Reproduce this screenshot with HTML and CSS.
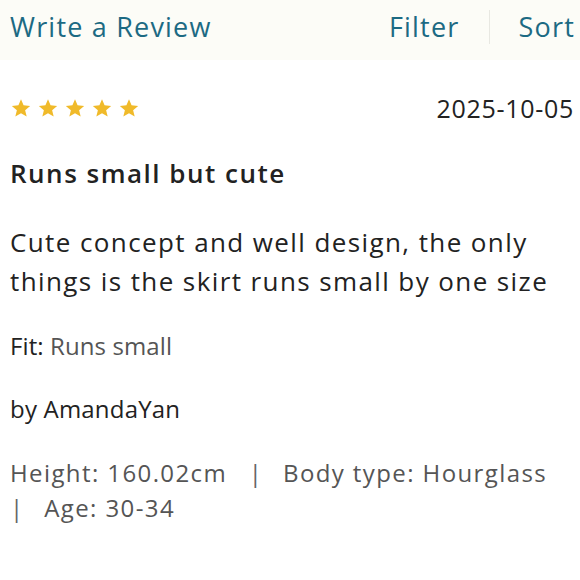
FILE: index.html
```html
<!DOCTYPE html>
<html lang="en">
<head>
<meta charset="utf-8">
<link rel="stylesheet" href="styles.css">
</head>
<body>
<header class="topbar">
  <a class="link">Write a Review</a>
  <nav class="actions">
    <a class="link">Filter</a>
    <span class="divider"></span>
    <a class="link">Sort</a>
  </nav>
</header>
<article class="review">
  <div class="meta-row">
    <div class="stars">
      <svg viewBox="0 0 24 24"><path d="M12 2.5l2.8 6.6 7.2.6-5.5 4.7 1.7 7-6.2-3.8-6.2 3.8 1.7-7L2 9.7l7.2-.6z"/></svg>
      <svg viewBox="0 0 24 24"><path d="M12 2.5l2.8 6.6 7.2.6-5.5 4.7 1.7 7-6.2-3.8-6.2 3.8 1.7-7L2 9.7l7.2-.6z"/></svg>
      <svg viewBox="0 0 24 24"><path d="M12 2.5l2.8 6.6 7.2.6-5.5 4.7 1.7 7-6.2-3.8-6.2 3.8 1.7-7L2 9.7l7.2-.6z"/></svg>
      <svg viewBox="0 0 24 24"><path d="M12 2.5l2.8 6.6 7.2.6-5.5 4.7 1.7 7-6.2-3.8-6.2 3.8 1.7-7L2 9.7l7.2-.6z"/></svg>
      <svg viewBox="0 0 24 24"><path d="M12 2.5l2.8 6.6 7.2.6-5.5 4.7 1.7 7-6.2-3.8-6.2 3.8 1.7-7L2 9.7l7.2-.6z"/></svg>
    </div>
    <span class="date">2025-10-05</span>
  </div>
  <h2 class="title">Runs small but cute</h2>
  <p class="body">Cute concept and well design, the only things is the skirt runs small by one size</p>
  <p class="fit"><span class="label">Fit:</span> Runs small</p>
  <p class="author">by AmandaYan</p>
  <p class="details"><span class="item">Height: 160.02cm</span> <span class="sep">|</span> <span class="item">Body type: Hourglass</span> <span class="sep">|</span> <span class="item">Age: 30-34</span></p>
</article>
</body>
</html>
```
FILE: styles.css
```css
* { box-sizing: border-box; }
html, body { margin: 0; padding: 0; background: #fff; }
body {
  font-family: "Open Sans", Lato, sans-serif;
  color: #222;
  width: 580px;
}
.topbar {
  display: flex;
  justify-content: space-between;
  align-items: center;
  height: 60px;
  background: #fcfcf7;
  padding: 0 5px 6px 10px;
}
.link {
  color: #1c6a83;
  font-size: 27px;
  line-height: 36px;
  letter-spacing: 1.2px;
}
.actions {
  display: flex;
  align-items: center;
}
.divider {
  width: 1px;
  height: 34px;
  background: #e8e8e2;
  margin: 0 28px 0 30px;
}
.review {
  padding: 0 6px 0 10px;
}
.meta-row {
  display: flex;
  justify-content: space-between;
  align-items: center;
  margin-top: 35px;
  height: 26px;
}
.stars { display: flex; gap: 5px; }
.stars svg { width: 22px; height: 22px; fill: #f0ba2a; }
.date { font-size: 25px; line-height: 26px; color: #222; letter-spacing: 0.7px; }
.title {
  margin: 37px 0 0;
  font-size: 26px;
  font-weight: 600;
  letter-spacing: 1.5px;
  line-height: 30px;
  color: #222;
}
.body {
  margin: 35px 0 0;
  font-size: 26px;
  line-height: 39px;
  letter-spacing: 1.4px;
  color: #222;
}
.fit {
  margin: 30px 0 0;
  font-size: 24px;
  line-height: 30px;
  letter-spacing: 0.1px;
  color: #555;
}
.fit .label { color: #222; }
.author {
  margin: 33px 0 0;
  font-size: 24px;
  line-height: 30px;
  letter-spacing: 0.2px;
  color: #222;
}
.details {
  margin: 31px 0 0;
  font-size: 24px;
  line-height: 35px;
  letter-spacing: 1.4px;
  color: #555;
}
.item { margin-right: 14px; }
.sep {
  margin-right: 12px;
  color: #666;
}
```
